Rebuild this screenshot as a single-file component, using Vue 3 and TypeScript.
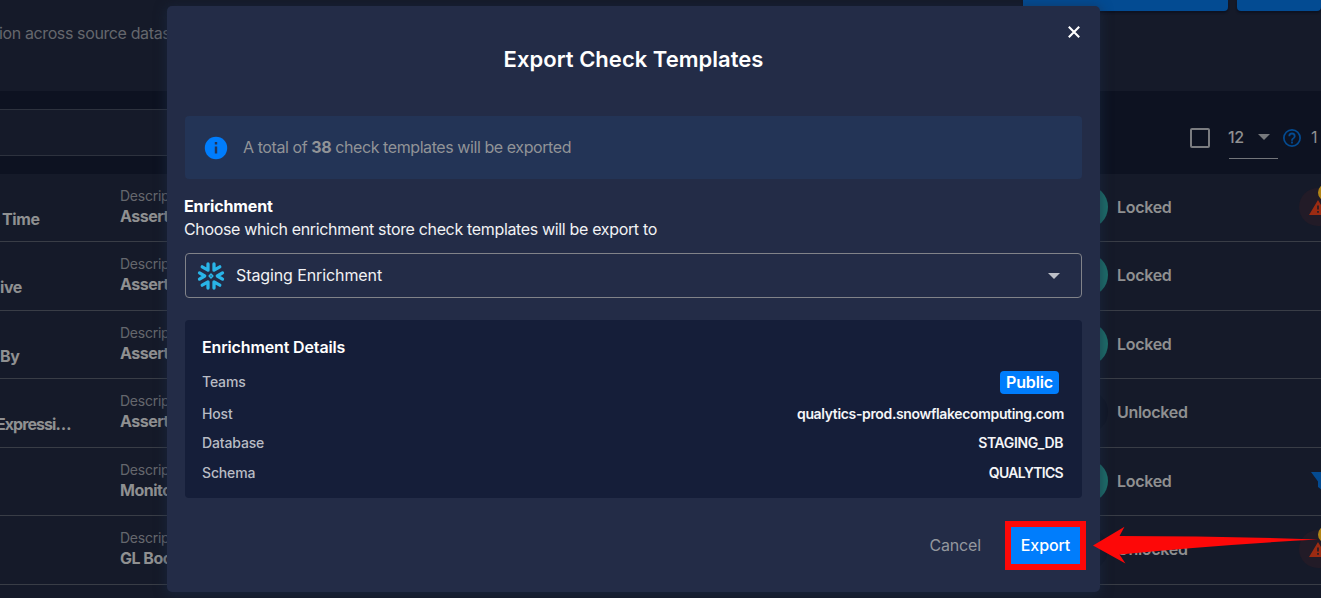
<script setup lang="ts">
interface Row {
  name: string
  shift?: boolean
  description: string
  locked: boolean
  mark?: 'warning' | 'filter'
}

const rows: Row[] = [
  { name: 'Time', description: 'Asserts', locked: true, mark: 'warning' },
  { name: 'ive', description: 'Asserts', locked: true },
  { name: 'By', description: 'Asserts', locked: true },
  { name: 'Expressi…', shift: true, description: 'Asserts', locked: false },
  { name: '', description: 'Monitor', locked: true, mark: 'filter' },
  { name: '', description: 'GL Book', locked: false, mark: 'warning' },
]

const details = [
  { label: 'Host', value: 'qualytics-prod.snowflakecomputing.com', cls: 'host' },
  { label: 'Database', value: 'STAGING_DB', cls: 'db' },
  { label: 'Schema', value: 'QUALYTICS', cls: 'schema' },
]
</script>

<template>
  <div class="page">
    <header class="top">
      <p class="lead">ion across source datastores</p>
      <div class="top-buttons"><i class="b1"></i><i class="b2"></i></div>
    </header>
    <section class="toolbar">
      <div class="search"></div>
      <div class="tools">
        <span class="checkbox"></span>
        <span class="size"><b>12</b>
          <svg width="12" height="6" viewBox="0 0 12 6"><path d="M0 0h12L6 6z" fill="#77797d" /></svg>
        </span>
        <svg class="help" width="18" height="18" viewBox="2 2 20 20" fill="#044b91"><path d="M11 18h2v-2h-2v2m1-16A10 10 0 0 0 2 12a10 10 0 0 0 10 10 10 10 0 0 0 10-10A10 10 0 0 0 12 2m0 18c-4.410 0-8-3.590-8-8s3.590-8 8-8 8 3.590 8 8-3.590 8-8 8m0-14a4 4 0 0 0-4 4h2a2 2 0 0 1 2-2 2 2 0 0 1 2 2c0 2-3 1.750-3 5h2c0-2.250 3-2.500 3-5a4 4 0 0 0-4-4z" /></svg>
        <span class="count">1</span>
      </div>
    </section>
    <main class="list">
      <div v-for="(row, i) in rows" :key="i" class="row">
        <div class="name" :class="{ shift: row.shift, time: i === 0 }">{{ row.name }}</div>
        <div class="desc"><span>Description</span><strong>{{ row.description }}</strong></div>
        <i class="dot" :class="{ on: row.locked }"></i>
        <div class="state">{{ row.locked ? 'Locked' : 'Unlocked' }}</div>
        <div class="mark">
          <div v-if="row.mark === 'warning'" class="warn">
            <svg width="18" height="15" viewBox="1 2 22 19" preserveAspectRatio="none" fill="#9c2b12"><path d="M13 14h-2V9h2m0 9h-2v-2h2M1 21h22L12 2 1 21z" /></svg>
            <i class="badge"></i>
          </div>
          <svg v-if="row.mark === 'filter'" class="filter" width="21" height="21" viewBox="0 0 21 21" fill="#044b91"><path d="M0 0h21l-7 9.500V20l-7-5V9.500z" /></svg>
        </div>
      </div>
    </main>

    <div class="dialog">
      <svg class="close" width="12" height="12" viewBox="0 0 12 12" stroke="#fff" stroke-width="2.100"><path d="M.8.800l10.400 10.400M11.200.800L.8 11.200" /></svg>
      <h1>Export Check Templates</h1>
      <div class="alert">
        <svg width="24" height="24" viewBox="0 0 24 24"><circle cx="12" cy="12" r="11.200" fill="#007dfc" /><path d="M10.800 6h2.400v2.400h-2.400zM10.800 10.600h2.400v7h-2.400z" fill="#233456" /></svg>
        <p>A total of <b>38</b> check templates will be exported</p>
      </div>
      <h2>Enrichment</h2>
      <p class="hint">Choose which enrichment store check templates will be export to</p>
      <div class="select">
        <svg width="28" height="28" viewBox="-14 -14 28 28" fill="none" stroke="#29b5e8" stroke-linecap="round" stroke-linejoin="round">
          <path d="M-3-12v6.200l-5.800-3.400M3-12v6.200l5.800-3.400M-3 12v-6.200l-5.800 3.400M3 12v-6.200l5.800 3.400M-11.500-3.100L-6.300 0l-5.200 3.100M11.500-3.100L6.300 0l5.200 3.100" stroke-width="3.300" />
          <path d="M0-1.900L1.900 0 0 1.900-1.900 0z" stroke-width="1.500" />
        </svg>
        <span>Staging Enrichment</span>
        <svg class="caret" width="12" height="6" viewBox="0 0 12 6"><path d="M0 0h12L6 6z" fill="#bdc0c8" /></svg>
      </div>
      <section class="details">
        <h3>Enrichment Details</h3>
        <div class="line teams"><span>Teams</span><em>Public</em></div>
        <div v-for="d in details" :key="d.label" class="line"><span>{{ d.label }}</span><b :class="d.cls">{{ d.value }}</b></div>
      </section>
      <footer>
        <span class="cancel">Cancel</span>
        <button class="export">Export</button>
      </footer>
    </div>

    <svg class="arrow" width="226" height="38" viewBox="0 0 226 38"><path d="M0 19.500L31.500.800 26.500 10Q130 10 225 13.500 130 18.500 26.500 28.500L32.500 37.500z" fill="#fd0808" /></svg>
  </div>
</template>

<style>
body { background: #151a29; overflow: hidden; }
</style>

<style scoped>
* { box-sizing: border-box; }
.page { position: relative; width: 1321px; height: 598px; overflow: hidden; background: #151a29; font-family: Inter, "Noto Sans", sans-serif; color: #8f9091; font-size: 16px; }
p, h1, h2, h3 { margin: 0; font-weight: inherit; }
svg { display: block; flex: none; }
.top { height: 91px; display: flex; justify-content: space-between; }
.lead { padding-top: 23px; line-height: 20px; color: #65676d; margin-left: -1px; letter-spacing: -.38px; white-space: nowrap; }
.top-buttons { display: flex; gap: 9px; height: 11px; }
.top-buttons i { background: #034b92; border-radius: 0 0 4px 4px; box-shadow: 0 2px 2px #0d1221; }
.b1 { width: 205px; }
.b2 { width: 84px; }
.toolbar { height: 83px; background: #0d1221; display: flex; align-items: center; }
.search { width: 1000px; height: 47px; background: #151a29; border: solid #2d323e; border-width: 1px 0; }
.tools { display: flex; align-items: center; margin-left: 190px; height: 42px; margin-top: 10px; }
.checkbox { width: 20px; height: 20px; border: 2px solid #7b7c80; border-radius: 2px; }
.size { width: 49px; height: 42px; margin-left: 19px; border-bottom: 1px solid #73757a; display: flex; align-items: center; justify-content: space-between; padding-right: 8px; }
.size b { font-weight: 500; letter-spacing: -.5px; margin-left: -1px; }
.help { margin-left: 5px; }
.count { margin-left: 10px; margin-top: -2px; }
.list { display: grid; grid-template-rows: 68px 69px 68px 69px 68px 69px; }
.row { display: grid; grid-template-columns: 120px 944px 44px 191px 22px; border-bottom: 1px solid #393d46; white-space: nowrap; }
.name { padding-top: 35px; line-height: 20px; font-weight: 700; letter-spacing: -.4px; }
.name.time { padding-left: 2px; }
.name.shift { margin-left: -4px; letter-spacing: -.95px; }
.desc { display: flex; flex-direction: column; padding-top: 12px; }
.desc span { font-size: 14px; line-height: 20px; color: #65676d; letter-spacing: -.25px; }
.desc strong { font-size: 16px; line-height: 20px; letter-spacing: -.5px; }
.dot { width: 44px; height: 44px; border-radius: 50%; margin-top: 11px; background: #111625; }
.dot.on { background: #1d6e69; }
.state { padding: 23px 0 0 9px; line-height: 20px; font-weight: 600; letter-spacing: -.3px; }
.warn { position: relative; width: 38px; height: 38px; margin-top: 14px; border-radius: 50%; background: #221b27; padding: 12px 0 0 10px; }
.badge { position: absolute; left: 19px; top: -4px; width: 17px; height: 17px; border-radius: 50%; background: #b28416; }
.filter { margin: 24px 0 0 12px; }
.dialog { position: absolute; left: 167px; top: 6px; width: 933px; height: 586px; background: #232c47; border-radius: 5px; padding: 40px 18px 0; box-shadow: 0 2px 12px 1px #1b2b4699; color: #fff; }
.close { position: absolute; right: 20px; top: 20px; }
h1 { font-size: 22px; line-height: 26px; font-weight: 600; letter-spacing: .02px; text-align: center; }
.alert { margin-top: 44px; height: 63px; border-radius: 4px; background: #233456; display: flex; align-items: center; padding-left: 19px; gap: 15px; color: #919397; }
.alert p { letter-spacing: -.42px; margin-top: -2px; }
h2 { margin-top: 17px; line-height: 20px; font-size: 16px; font-weight: 700; margin-left: -1px; letter-spacing: -.12px; }
.hint { line-height: 20px; margin: 3px 0 0 -1px; letter-spacing: -.34px; color: #f1f2f4; }
.select { margin-top: 14px; height: 45px; border: 1px solid #818389; border-radius: 4px; display: flex; align-items: center; padding: 0 20px 0 11px; gap: 11px; letter-spacing: -.1px; color: #f1f2f4; }
.select span { margin-top: -2px; }
.caret { margin-left: auto; margin-right: 1px; }
.details { margin-top: 22px; height: 178px; background: #151e39; border-radius: 4px; padding: 17px 18px 0 17px; }
h3 { font-size: 16px; line-height: 20px; font-weight: 600; letter-spacing: -.14px; margin-bottom: 13px; }
.line { display: flex; justify-content: space-between; align-items: center; height: 29.500px; font-size: 14px; color: #b9bcc4; font-weight: 500; letter-spacing: -.15px; }
.line span, .line b { margin-top: -2px; }
.teams { height: 25px; margin-bottom: 4.500px; }
.line em { font-style: normal; font-weight: 600; font-size: 16px; color: #fff; background: #007dfc; border-radius: 4px; width: 59px; height: 23px; line-height: 23px; text-align: center; margin-right: 5px; }
.line b { font-weight: 600; color: #f4f5f7; }
.line .host { letter-spacing: -.35px; }
.line .db { letter-spacing: -.38px; margin-right: 1px; }
.line .schema { letter-spacing: -.72px; margin-right: 1px; }
footer { display: flex; justify-content: flex-end; align-items: center; margin-top: 29px; height: 37px; padding-right: 2px; gap: 30px; }
.cancel { color: #94979e; letter-spacing: -.15px; margin-top: -2px; }
.export { width: 69px; height: 37px; border: 0; padding: 0 0 2px; background: #007dfc; color: #fff; font: 500 16px Inter, sans-serif; letter-spacing: -.1px; box-shadow: 0 0 0 6px #fd0808; }
.arrow { position: absolute; left: 1093px; top: 526px; }
</style>
